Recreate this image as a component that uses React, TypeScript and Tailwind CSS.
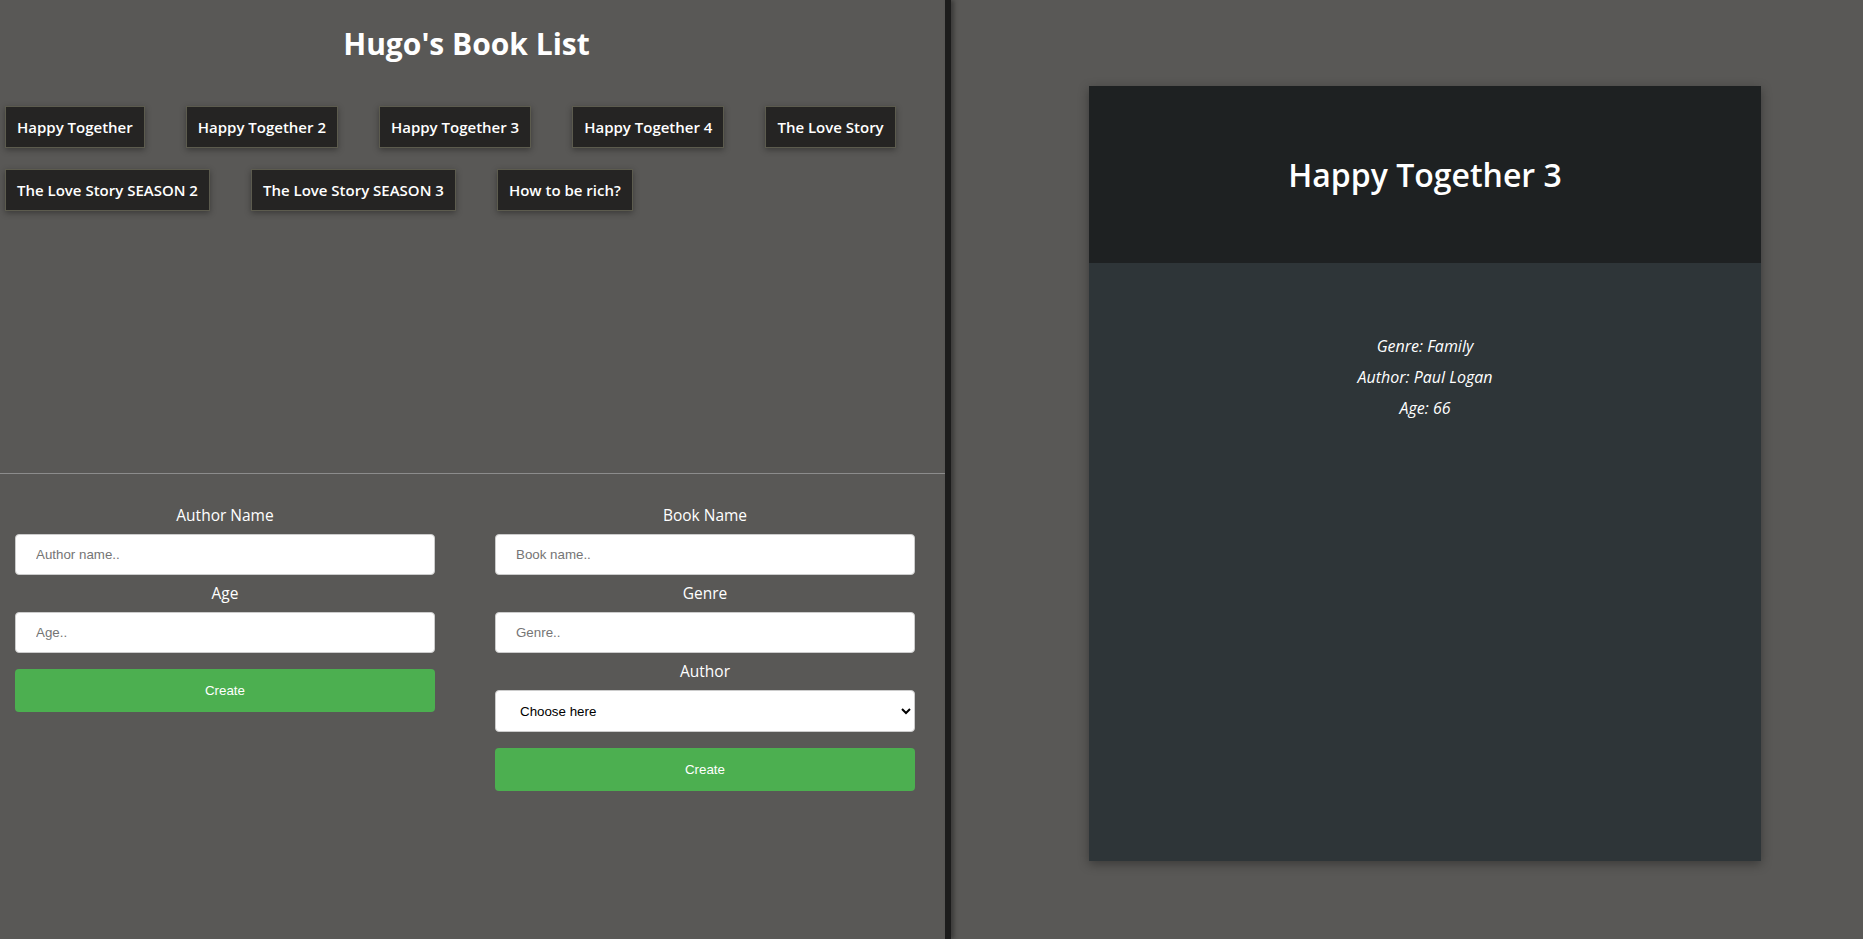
import { useState } from "react";

interface Book {
  name: string;
  genre: string;
  author: string;
  age: number;
}

const books: Book[] = [
  { name: "Happy Together", genre: "Family", author: "Paul Logan", age: 66 },
  { name: "Happy Together 2", genre: "Family", author: "Paul Logan", age: 66 },
  { name: "Happy Together 3", genre: "Family", author: "Paul Logan", age: 66 },
  { name: "Happy Together 4", genre: "Family", author: "Paul Logan", age: 66 },
  { name: "The Love Story", genre: "Romance", author: "Paul Logan", age: 66 },
  { name: "The Love Story SEASON 2", genre: "Romance", author: "Paul Logan", age: 66 },
  { name: "The Love Story SEASON 3", genre: "Romance", author: "Paul Logan", age: 66 },
  { name: "How to be rich?", genre: "Finance", author: "Paul Logan", age: 66 },
];

const ui = { fontFamily: '"Open Sans", "Noto Sans", sans-serif' };
const arial = { fontFamily: '"Liberation Sans", Arial, sans-serif' };

function Field({ label, placeholder }: { label: string; placeholder: string }) {
  return (
    <>
      <label className="block h-[21px] text-center text-[15.5px] leading-[21px] text-white" style={ui}>
        {label}
      </label>
      <input
        placeholder={placeholder}
        className="my-2 h-[41px] w-full rounded border border-[#cccccc] bg-white px-5 text-[13.33px] text-black outline-none placeholder:text-[#757575]"
        style={arial}
      />
    </>
  );
}

function CreateButton() {
  return (
    <button
      className="mt-2 h-[43px] w-full rounded bg-[#4caf50] text-[13.33px] text-white"
      style={arial}
    >
      Create
    </button>
  );
}

export default function App() {
  const [selected, setSelected] = useState<Book>(books[2]);

  return (
    <main className="flex h-[939px] w-full overflow-hidden bg-[#595856]">
      {/* Lista */}
      <div className="flex w-[945px] shrink-0 flex-col">
        <div className="h-[474px] border-b border-[#8c8c8c]">
          <div className="w-[933px] pt-[21px]">
            <h1
              className="text-center text-[30px] font-bold leading-[45px] text-white"
              style={ui}
            >
              Hugo's Book List
            </h1>
          </div>

          <div className="mt-[40px] flex flex-wrap gap-x-[41px] gap-y-[21px] pl-[5px]">
            {books.map((b) => (
              <button
                key={b.name}
                onClick={() => setSelected(b)}
                className="h-[42px] border border-[#5c5b4e] bg-[#252423] px-[11px] text-[15px] font-semibold text-white shadow-[0_2px_6px_rgba(0,0,0,0.35)]"
                style={ui}
              >
                {b.name}
              </button>
            ))}
          </div>
        </div>

        {/* Formulários */}
        <div className="grid w-[930px] grid-cols-2 gap-x-[30px] pt-[31px]">
          <div className="flex flex-col px-[15px]">
            <Field label="Author Name" placeholder="Author name.." />
            <Field label="Age" placeholder="Age.." />
            <CreateButton />
          </div>

          <div className="flex flex-col px-[15px]">
            <Field label="Book Name" placeholder="Book name.." />
            <Field label="Genre" placeholder="Genre.." />
            <label className="block h-[21px] text-center text-[15.5px] leading-[21px] text-white" style={ui}>
              Author
            </label>
            <select
              className="my-2 h-[42px] w-full rounded border border-[#cccccc] bg-white pl-[20px] pr-2 text-[13.33px] text-black outline-none"
              style={arial}
              defaultValue=""
            >
              <option value="">Choose here</option>
              <option value="paul">Paul Logan</option>
            </select>
            <CreateButton />
          </div>
        </div>
      </div>

      {/* Divisor */}
      <div className="w-[6px] shrink-0 bg-[#1c1c1c] shadow-[3px_0_4px_rgba(0,0,0,0.35)]" />

      {/* Detalhes */}
      <div className="flex-1 pl-[138px] pt-[86px]">
        <div className="flex h-[775px] w-[672px] flex-col bg-[#2e3538] shadow-[0_3px_10px_rgba(0,0,0,0.35)]">
          <div className="flex h-[177px] items-center justify-center bg-[#1e2122]">
            <h2 className="text-[32px] font-semibold text-white" style={ui}>
              {selected.name}
            </h2>
          </div>
          <div className="flex flex-col items-center gap-[10px] pt-[73px] text-[16px] italic leading-[21px] text-white" style={ui}>
            <p>Genre: {selected.genre}</p>
            <p>Author: {selected.author}</p>
            <p>Age: {selected.age}</p>
          </div>
        </div>
      </div>
    </main>
  );
}
